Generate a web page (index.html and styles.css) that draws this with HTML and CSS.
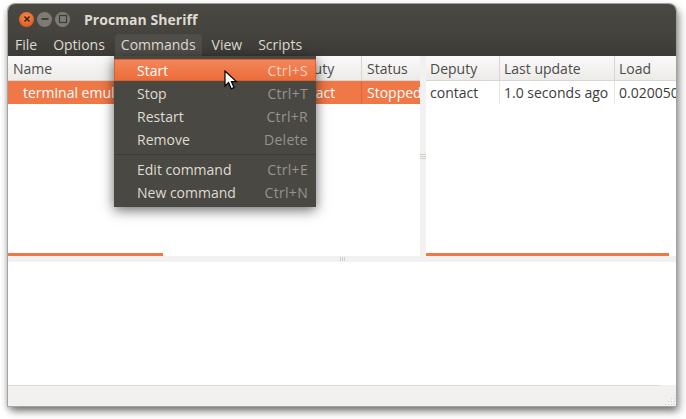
FILE: index.html
```html
<!DOCTYPE html>
<html lang="en">

<head>
    <meta charset="UTF-8">
    <title>Procman Sheriff</title>
    <link rel="stylesheet" href="styles.css">
</head>

<body>
    <div class="window">
        <div class="titlebar">
            <div class="buttons">
                <span class="btn close">
                    <svg width="14" height="14" viewBox="0 0 14 14"><path d="M4.5 4.5l5 5M9.5 4.5l-5 5" stroke="#3a2418" stroke-width="1.6" fill="none"/></svg>
                </span>
                <span class="btn">
                    <svg width="14" height="14" viewBox="0 0 14 14"><path d="M3.5 7h7" stroke="#3c3b37" stroke-width="1.8" fill="none"/></svg>
                </span>
                <span class="btn">
                    <svg width="14" height="14" viewBox="0 0 14 14"><rect x="3.5" y="3.5" width="7" height="7" stroke="#3c3b37" stroke-width="1.2" fill="none"/></svg>
                </span>
            </div>
            <span class="title">Procman Sheriff</span>
        </div>

        <ul class="menubar">
            <li>File</li>
            <li>Options</li>
            <li class="open">Commands</li>
            <li>View</li>
            <li>Scripts</li>
        </ul>

        <div class="panes">
            <div class="pane left-pane">
                <div class="head">
                    <div class="col col-name">Name</div>
                    <div class="col col-deputy">Deputy</div>
                    <div class="col col-status">Status</div>
                </div>
                <div class="row selected">
                    <div class="cell col-name indent">terminal emulator</div>
                    <div class="cell col-deputy">contact</div>
                    <div class="cell col-status">Stopped</div>
                </div>
                <div class="fill"></div>
                <div class="scroll"><div class="thumb thumb-left"></div></div>
            </div>
            <div class="vsplit"><i></i><i></i><i></i></div>
            <div class="pane right-pane">
                <div class="head">
                    <div class="col col-dep2">Deputy</div>
                    <div class="col col-update">Last update</div>
                    <div class="col col-load">Load</div>
                </div>
                <div class="row">
                    <div class="cell col-dep2">contact</div>
                    <div class="cell col-update">1.0 seconds ago</div>
                    <div class="cell col-load">0.020050</div>
                </div>
                <div class="fill"></div>
                <div class="scroll"><div class="thumb thumb-right"></div></div>
            </div>
        </div>

        <div class="hsplit"><i></i><i></i><i></i></div>
        <div class="output"></div>
        <div class="statusbar">
            <div class="rule"></div>
            <svg class="grip" width="12" height="12" viewBox="0 0 12 12" fill="#d2d0cb">
                <rect x="10" y="1" width="1" height="1"/>
                <rect x="7" y="4" width="1" height="1"/><rect x="10" y="4" width="1" height="1"/>
                <rect x="4" y="7" width="1" height="1"/><rect x="7" y="7" width="1" height="1"/><rect x="10" y="7" width="1" height="1"/>
                <rect x="1" y="10" width="1" height="1"/><rect x="4" y="10" width="1" height="1"/><rect x="7" y="10" width="1" height="1"/><rect x="10" y="10" width="1" height="1"/>
            </svg>
        </div>

        <div class="popup">
            <div class="item active"><span>Start</span><span class="key">Ctrl+S</span></div>
            <div class="item"><span>Stop</span><span class="key">Ctrl+T</span></div>
            <div class="item"><span>Restart</span><span class="key">Ctrl+R</span></div>
            <div class="item"><span>Remove</span><span class="key">Delete</span></div>
            <div class="sep"></div>
            <div class="item"><span>Edit command</span><span class="key">Ctrl+E</span></div>
            <div class="item"><span>New command</span><span class="key">Ctrl+N</span></div>
        </div>

        <svg class="pointer" width="14" height="21" viewBox="0 0 14 21">
            <path d="M1 1v15l3.6-3.4 2.6 6.2 2.8-1.2-2.6-6h5z" fill="#fff" stroke="#000" stroke-width="1.2"/>
        </svg>
    </div>
</body>

</html>
```

FILE: styles.css
```css
* {
    margin: 0;
    padding: 0;
    box-sizing: border-box;
}

ul {
    list-style: none;
}

html,
body {
    height: 100%;
    overflow: hidden;
    background: #fff;
}

body {
    padding: 4px 10px 13px 8px;
    font-family: "Open Sans", "Noto Sans", sans-serif;
    font-size: 14px;
}

.window {
    position: relative;
    height: 402px;
    display: flex;
    flex-direction: column;
    background: #f2f1ef;
    border-radius: 7px 7px 0 0;
    box-shadow: 0 0 0 1px #a5a39e, 3px 5px 8px rgba(0, 0, 0, 0.45), -1px 3px 6px rgba(0, 0, 0, 0.25);
}

.titlebar {
    height: 30px;
    display: flex;
    align-items: center;
    padding-left: 11px;
    border-radius: 7px 7px 0 0;
    background: linear-gradient(#4a4843, #45433e);
}

.buttons {
    display: flex;
    gap: 3px;
    width: 65px;
}

.btn {
    width: 15px;
    height: 15px;
    border-radius: 50%;
    background: #7d7b74;
    display: flex;
    align-items: center;
    justify-content: center;
}

.btn.close {
    background: radial-gradient(circle at 50% 35%, #f58a4a, #dc4c17);
}

.title {
    font-weight: 700;
    font-size: 14px;
    color: #dfdbd2;
    letter-spacing: 0.05px;
}

.menubar {
    height: 22px;
    display: flex;
    background: linear-gradient(#45433e, #3c3b37);
    color: #dfdbd2;
}

.menubar li {
    padding: 0 8px;
    line-height: 22px;
}

.menubar li:first-child {
    padding-left: 7px;
}

.menubar .open {
    background: #504e48;
    border-radius: 4px 4px 0 0;
    margin: 0 2px;
    padding: 0 6px;
}

.panes {
    height: 200px;
    display: flex;
}

.pane {
    display: flex;
    flex-direction: column;
    background: #fff;
    overflow: hidden;
}

.left-pane {
    width: 412px;
}

.right-pane {
    flex: 1;
}

.vsplit {
    width: 6px;
    display: flex;
    flex-direction: column;
    justify-content: center;
    gap: 1px;
    background: #f2f1ef;
}

.vsplit i {
    display: block;
    height: 1px;
    background: #d2d0cb;
}

.head {
    height: 25px;
    display: flex;
    flex: none;
    color: #4c4c4c;
    background: linear-gradient(#fbfafa, #ecebe8);
    border-bottom: 1px solid #d8d6d2;
}

.col {
    padding: 1px 4px 0;
    line-height: 24px;
    border-right: 1px solid #d8d6d2;
    white-space: nowrap;
    overflow: hidden;
    flex: none;
}

.head .col-name {
    padding-left: 5px;
}

.row {
    height: 23px;
    display: flex;
    flex: none;
    color: #3c3c3c;
}

.row.selected {
    background: #f07746;
    color: #fff;
}

.cell {
    padding: 1px 4px 0;
    line-height: 22px;
    border-right: 1px solid #e6e5e2;
    white-space: nowrap;
    overflow: hidden;
    flex: none;
}

.selected .cell {
    border-right-color: #d9683c;
}

.indent {
    padding-left: 15px;
}

.col-name {
    width: 275px;
}

.col-deputy {
    width: 79px;
}

.col-status {
    width: 58px;
    padding-left: 5px;
    border-right: 0;
}

.col-dep2 {
    width: 74px;
}

.col-update {
    width: 115px;
}

.col-load {
    width: 62px;
    border-right: 0;
}

.fill {
    flex: 1;
}

.scroll {
    height: 3px;
    flex: none;
}

.thumb {
    height: 3px;
    background: #f07746;
}

.thumb-left {
    width: 155px;
}

.thumb-right {
    width: 243px;
}

.hsplit {
    height: 6px;
    flex: none;
    display: flex;
    justify-content: center;
    gap: 1px;
    padding: 1px 0;
    background: #f2f1ef;
}

.hsplit i {
    width: 1px;
    background: #d2d0cb;
}

.output {
    flex: 1;
    background: #fff;
}

.statusbar {
    height: 21px;
    flex: none;
    display: flex;
    flex-direction: column;
    justify-content: space-between;
    align-items: flex-end;
}

.rule {
    height: 1px;
    align-self: stretch;
    margin-right: 16px;
    background: #dcdad5;
}

.popup {
    position: absolute;
    left: 106px;
    top: 52px;
    width: 202px;
    height: 151px;
    padding-top: 3px;
    background: #4a4843;
    color: #dfdbd2;
    box-shadow: 0 3px 12px rgba(0, 0, 0, 0.6);
}

.item {
    height: 23px;
    display: flex;
    justify-content: space-between;
    align-items: center;
    padding: 0 8px 0 23px;
}

.item.active {
    height: 22px;
    margin-bottom: 1px;
    background: linear-gradient(#f4865a, #ec6c3a);
    border: 1px solid #d9622f;
    color: #fff;
    padding: 0 7px 0 22px;
}

.key {
    color: #96948d;
    letter-spacing: 0.3px;
}

.active .key {
    color: #f6d3c2;
}

.sep {
    height: 1px;
    margin: 3px 0 3px;
    background: #3c3b37;
}

.pointer {
    position: absolute;
    left: 216px;
    top: 66px;
}
```
